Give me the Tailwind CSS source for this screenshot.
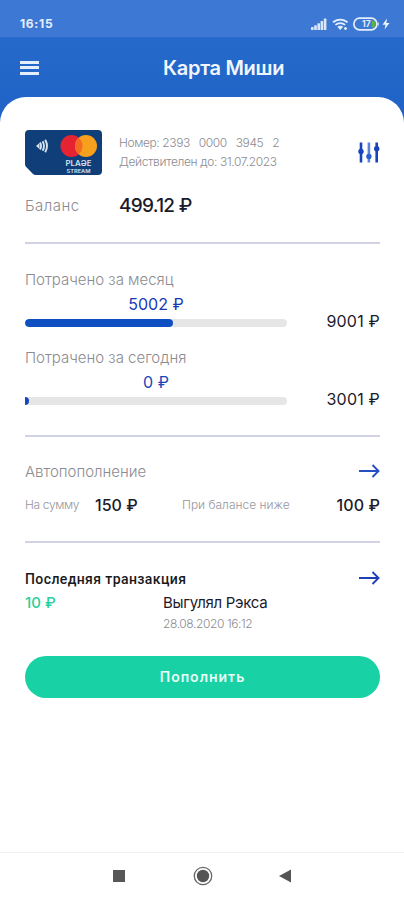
<!DOCTYPE html>
<html lang="ru">
<head>
<meta charset="utf-8">
<meta name="viewport" content="width=device-width, initial-scale=1">
<title>Карта Миши</title>
<script src="https://cdn.jsdelivr.net/npm/@tailwindcss/browser@4"></script>
</head>
<body class="w-[404px] h-[900px] overflow-hidden bg-white font-['Inter','Noto_Sans',sans-serif] text-[#1b1b2b] whitespace-nowrap">
<div class="flex flex-col h-full bg-linear-to-b from-[#256acb] from-4% to-[#2062c6] to-14%">
  <div class="h-[37px] shrink-0 bg-[#3d79d4] flex items-center justify-between pl-[20px] pr-[14px] pt-[11px] text-white">
    <span class="text-[12px] font-bold tracking-[0.7px] leading-none text-[#e6effc]">16:15</span>
    <div class="flex items-center h-[14px]">
      <svg width="16" height="12" viewBox="0 0 16 12" fill="#dbe6f8"><rect x="0" y="9" width="2.6" height="3" rx=".6"/><rect x="3.2" y="7.2" width="2.6" height="4.8" rx=".6"/><rect x="6.4" y="5.2" width="2.6" height="6.8" rx=".6"/><rect x="9.6" y="3" width="2.6" height="9" rx=".6"/><rect x="12.8" y=".6" width="2.6" height="11.4" rx=".6"/></svg>
      <svg class="ml-[5px]" width="17" height="13" viewBox="0 0 17 13" fill="none" stroke="#e4edfb" stroke-width="1.8"><path d="M1 4.4C5 .6 11.5 .6 15.5 4.4M3.4 6.9c2.800-2.500 6.900-2.500 9.700 0"/><path d="M5.300 8.800c1.800-1.500 4.100-1.500 5.900 0L8.250 12Z" fill="#e4edfb" stroke="none"/><path d="M13.500 9v3M12 10.500h3" stroke-width="1.300"/></svg>
      <svg class="ml-[4px]" width="26" height="14" viewBox="0 0 26 14"><rect x=".9" y="1.200" width="23" height="11.600" rx="5.600" fill="none" stroke="#e4edfb" stroke-width="1.700"/><path d="M18.500 3.400h1c4 0 4 7.200 0 7.200h-1z" fill="#58b34a"/><path d="M25.200 5.500v3" stroke="#e4edfb"/><text x="9" y="10.200" font-family="Inter" font-size="8.500" font-weight="700" fill="#e4edfb">17</text></svg>
      <svg class="ml-[3px]" width="8" height="12" viewBox="0 0 8 12" fill="#eef4fd"><path d="M5 .5.500 6.800h3L2.500 11.500 7.500 5H4.400Z"/></svg>
    </div>
  </div>
  <header class="h-[60px] shrink-0 flex items-center pl-[20px] pb-[1px]">
    <div class="w-[19px] flex flex-col gap-[2.500px] mt-[2px]"><i class="h-[3px] bg-[#e3edfb]"></i><i class="h-[3px] bg-[#e3edfb]"></i><i class="h-[3px] bg-[#e3edfb]"></i></div>
    <h1 class="ml-[124px] mt-[3px] text-[20px] font-semibold leading-none tracking-[-0.3px] text-[#f1f6fe]">Карта Миши</h1>
  </header>
  <main class="flex-1 flex flex-col bg-white rounded-t-[26px] pt-[33px] pl-[25px] pr-[24px] leading-[18px]">
    <div class="h-[45px] flex">
      <svg width="78" height="45" viewBox="0 0 78 45"><path d="M4 0H73a4 4 0 0 1 4 4V41a4 4 0 0 1-4 4H11Q9 45 7.500 43.500L1.200 37Q0 36 0 34V4a4 4 0 0 1 4-4Z" fill="#103e79"/><circle cx="46.500" cy="16" r="11" fill="#e62332"/><circle cx="61" cy="16" r="11" fill="#f7a01e"/><path d="M53.750 7.700a11 11 0 0 1 0 16.600a11 11 0 0 1 0-16.600Z" fill="#f36b21"/><path d="M11 16l3.500-3v6z" fill="#d7e2f0"/><g fill="none" stroke="#d7e2f0" stroke-width="1.900"><path d="M15 12.500q2.200 3.500 0 7M17.600 11.200q2.800 4.800 0 9.600M20.200 9.800q3.600 6.200 0 12.400"/></g><g font-family="Inter" fill="#d9e3f1" font-weight="600"><text x="40.500" y="36" font-size="7" textLength="26" lengthAdjust="spacingAndGlyphs">PLAƏE</text><text x="41.500" y="43.200" font-size="4.500" textLength="24" lengthAdjust="spacingAndGlyphs">STREAM</text></g></svg>
      <div class="ml-[16px] mt-[3px] flex flex-col text-[12px] leading-[19px] font-light text-[#8b8b91]">
        <span class="whitespace-pre tracking-[-0.4px]">Номер: 2393   0000   3945   2</span>
        <span class="tracking-[-0.36px]">Действителен до: 31.07.2023</span>
      </div>
      <svg class="ml-auto mt-[12px]" width="22" height="22" viewBox="0 0 22 22" stroke="#1743bd" stroke-width="2.600" fill="#1743bd"><path d="M3 .5v20M18.700 .5v20"/><path d="M10.900 .5v20" stroke="#5c83da"/><g stroke="none"><circle cx="3" cy="9.500" r="2.700"/><circle cx="10.900" cy="14.500" r="2.700" fill="#2b5fcc"/><circle cx="18.700" cy="6.800" r="2.700"/></g></svg>
    </div>
    <div class="mt-[18px] h-[24px] flex items-center"><span class="w-[94px] pt-[1px] text-[15px] font-light tracking-[0.5px] text-[#8b8b91]">Баланс</span><span class="pt-[1px] text-[19px] font-medium tracking-[-0.7px]">499.12 ₽</span></div>
    <hr class="mt-[25px] border-0 h-[2px] shrink-0 bg-[#d2d2e5]">

    <div class="mt-[27px] text-[15px] font-light text-[#8b8b91] h-[18px]">Потрачено за месяц</div>
    <div class="mt-[6px] h-[32px] flex justify-between">
      <div class="w-[262px] flex flex-col items-center"><span class="text-[16px] text-[#1739b5] h-[18px]">5002 ₽</span><div class="mt-[6px] w-full h-[8px] rounded-full overflow-hidden bg-[#e6e6e6]"><div class="h-full rounded-full bg-[#0e50c2]" style="width:56.500%"></div></div></div>
      <span class="mt-[17px] text-[16px] tracking-[0.2px]">9001 ₽</span>
    </div>
    <div class="mt-[22px] text-[15px] font-light text-[#8b8b91] h-[18px]">Потрачено за сегодня</div>
    <div class="mt-[6px] h-[32px] flex justify-between">
      <div class="w-[262px] flex flex-col items-center"><span class="text-[16px] text-[#1747bd] h-[18px]">0 ₽</span><div class="mt-[6px] w-full h-[8px] rounded-r-full overflow-hidden bg-[#e6e6e6]"><div class="h-full w-[4px] rounded-r-full bg-[#1747bd]"></div></div></div>
      <span class="mt-[17px] text-[16px] tracking-[0.2px]">3001 ₽</span>
    </div>
    <hr class="mt-[30px] border-0 h-[2px] shrink-0 bg-[#d2d2e5]">

    <div class="mt-[25px] h-[18px] flex items-center justify-between text-[15px] font-light text-[#8b8b91]"><span class="pt-[1px]">Автопополнение</span>
      <svg width="22" height="14" viewBox="0 0 22 14" fill="none" stroke="#2450c4" stroke-width="1.900"><path d="M1 7H20M14.500 1l6 6-6 6"/></svg></div>
    <div class="mt-[16px] h-[18px] flex items-center"><span class="w-[70px] text-[12px] font-light tracking-[-0.35px] text-[#96969c]">На сумму</span><span class="w-[87px] text-[16px] font-medium">150 ₽</span><span class="text-[12px] font-light text-[#96969c]">При балансе ниже</span><span class="ml-auto text-[16px] font-medium tracking-[0.1px]">100 ₽</span></div>
    <hr class="mt-[27px] border-0 h-[2px] shrink-0 bg-[#d2d2e5]">

    <div class="mt-[26px] h-[18px] flex items-center justify-between"><span class="font-['Roboto'] font-medium text-[14px] tracking-[0.4px] pt-[1px] text-[#19191c]">Последняя транзакция</span>
      <svg width="22" height="14" viewBox="0 0 22 14" fill="none" stroke="#2040b8" stroke-width="1.900"><path d="M1 7H20M14.500 1l6 6-6 6"/></svg></div>
    <div class="mt-[7px] flex"><span class="w-[138px] text-[15px] font-medium text-[#27d09c]">10 ₽</span>
      <div class="flex flex-col"><span class="text-[15px] tracking-[-0.3px]">Выгулял Рэкса</span><span class="mt-[3px] text-[12px] font-light tracking-[-0.4px] text-[#8b8b91]">28.08.2020 16:12</span></div></div>
    <button class="mt-[23px] h-[42px] shrink-0 rounded-full bg-[#18d2a5] text-[#e9fcf6] text-[14px] font-semibold tracking-[1px]">Пополнить</button>
  </main>
  <nav class="h-[48px] shrink-0 bg-white border-t border-[#f0f0f0] flex items-center pl-[113px] pb-[1px]">
    <svg width="12" height="12" viewBox="0 0 12 12"><path d="M0 0h12v12H0z" fill="#575757"/></svg>
    <svg class="ml-[68px]" width="20" height="20" viewBox="0 0 20 20"><circle cx="10" cy="10" r="8.700" fill="none" stroke="#666" stroke-width="1.300"/><circle cx="10" cy="10" r="6.200" fill="#555"/></svg>
    <svg class="ml-[66px]" width="12" height="14" viewBox="0 0 12 14"><path d="M12 .5v13L0 7z" fill="#555"/></svg>
  </nav>
</div>
</body>
</html>
